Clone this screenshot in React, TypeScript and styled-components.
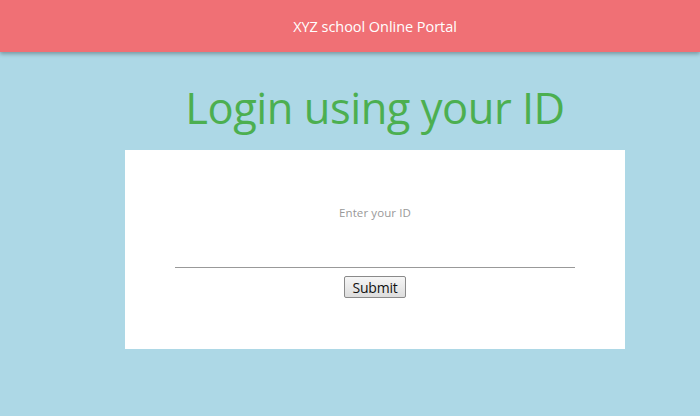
import React from "react";
import styled, { createGlobalStyle } from "styled-components";

const Global = createGlobalStyle`
  html, body { margin: 0; padding: 0; background: #add8e6; }
  body { font-family: "Open Sans", "Noto Sans", sans-serif; }
`;

const Page = styled.div`
  min-height: 416px;
  background: #add8e6;
`;

const Header = styled.header`
  height: 52px;
  background: #f07075;
  box-shadow: 0 2px 4px rgba(0,0,0,0.3);
  display: flex;
  align-items: center;
  justify-content: center;
  padding-left: 50px;
  color: #ffffff;
  font-size: 14.5px;
  letter-spacing: -0.05px;
`;

const Main = styled.main`
  display: flex;
  flex-direction: column;
  align-items: center;
  padding-left: 50px;
`;

const Title = styled.h1`
  margin: 26px 0 0;
  height: 72px;
  color: #4caf50;
  font-weight: 400;
  font-size: 43.5px;
  letter-spacing: -0.5px;
  line-height: 60px;
`;

const Card = styled.form`
  width: 500px;
  height: 199px;
  background: #ffffff;
  display: flex;
  flex-direction: column;
  align-items: center;
  box-sizing: border-box;
  padding-top: 55px;
`;

const Label = styled.div`
  color: #999999;
  font-size: 11.5px;
  letter-spacing: 0.1px;
`;

const Input = styled.input`
  margin-top: 23px;
  width: 400px;
  height: 24px;
  border: none;
  border-bottom: 1px solid #999999;
  outline: none;
  background: transparent;
  padding: 0;
`;

const Button = styled.button`
  margin-top: 8px;
  width: 62px;
  height: 22px;
  padding: 0;
  font-family: "Open Sans", sans-serif;
  font-size: 14px;
  color: #111;
  background: linear-gradient(#f6f6f6, #dddddd);
  border: 1px solid #8a8a8a;
  border-radius: 2px;
  letter-spacing: -0.2px;
`;

export default function App() {
  return (
    <Page>
      <Global />
      <Header>XYZ school Online Portal</Header>
      <Main>
        <Title>Login using your ID</Title>
        <Card onSubmit={(e) => e.preventDefault()}>
          <Label>Enter your ID</Label>
          <Input type="text" />
          <Button type="submit">Submit</Button>
        </Card>
      </Main>
    </Page>
  );
}
